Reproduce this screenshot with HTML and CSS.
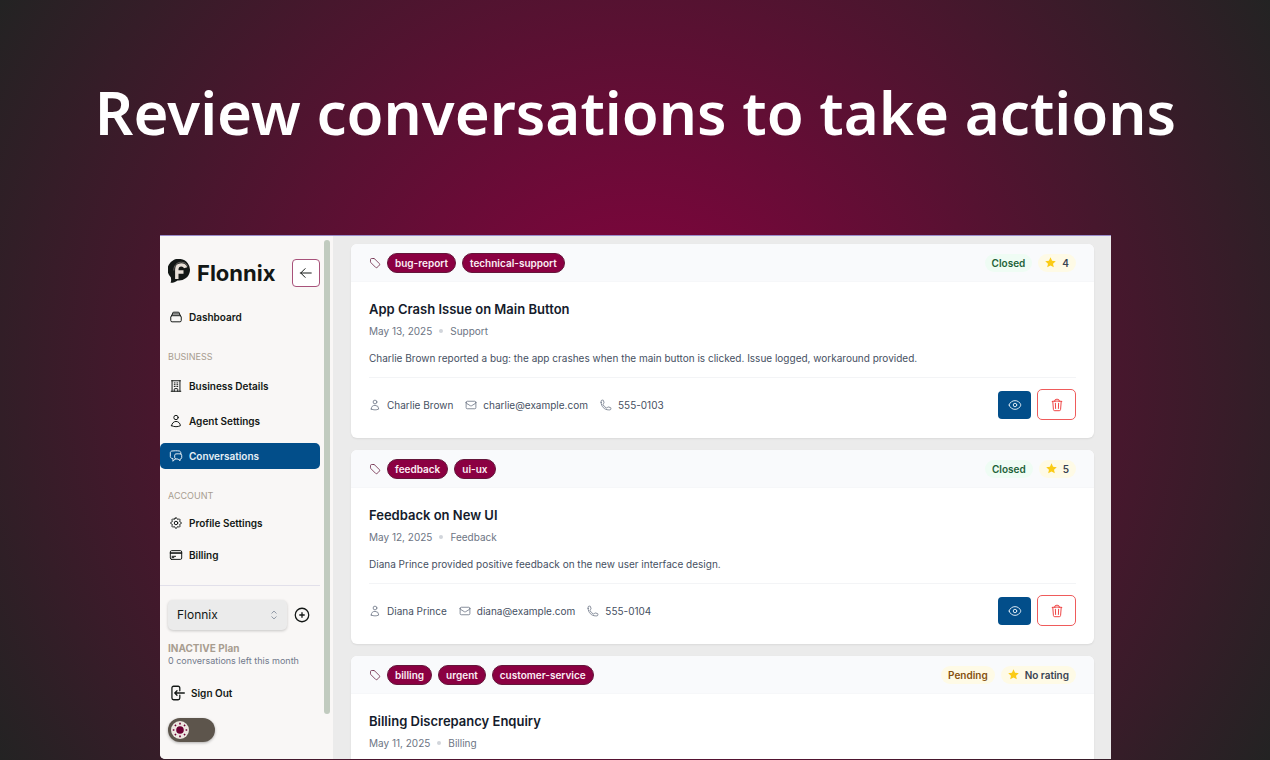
FILE: index.html
```html
<!DOCTYPE html>
<html lang="en">
<head>
    <meta charset="UTF-8">
    <meta name="viewport" content="width=device-width, initial-scale=1.0">
    <title>Flonnix - Conversations</title>
    <link rel="stylesheet" href="styles.css">
</head>
<body>
    <!-- Icon sprite -->
    <svg class="sprite" aria-hidden="true">
        <symbol id="i-stack" viewBox="0 0 24 24"><path d="M6 6.878V6a2.25 2.25 0 0 1 2.25-2.25h7.5A2.25 2.25 0 0 1 18 6v.878m-12 0c.235-.083.487-.128.75-.128h10.5c.263 0 .515.045.75.128m-12 0A2.25 2.25 0 0 0 4.5 9v.878m13.5-3A2.25 2.25 0 0 1 19.5 9v.878m0 0a2.246 2.246 0 0 0-.75-.128H5.25c-.263 0-.515.045-.75.128m15 0A2.25 2.25 0 0 1 21 12v6a2.25 2.25 0 0 1-2.25 2.25H5.25A2.25 2.25 0 0 1 3 18v-6c0-.98.626-1.813 1.5-2.122"/></symbol>
        <symbol id="i-building" viewBox="0 0 24 24"><path d="M3.75 21h16.5M4.5 3h15M5.25 3v18m13.5-18v18M9 6.75h1.5m-1.5 3h1.5m-1.5 3h1.5m3-6H15m-1.5 3H15m-1.5 3H15M9 21v-3.375c0-.621.504-1.125 1.125-1.125h3.75c.621 0 1.125.504 1.125 1.125V21"/></symbol>
        <symbol id="i-user" viewBox="0 0 24 24"><path d="M15.75 6a3.75 3.75 0 1 1-7.5 0 3.75 3.75 0 0 1 7.5 0ZM4.501 20.118a7.5 7.5 0 0 1 14.998 0A17.933 17.933 0 0 1 12 21.75c-2.676 0-5.216-.584-7.499-1.632Z"/></symbol>
        <symbol id="i-chat" viewBox="0 0 24 24"><path d="M20.25 8.511c.884.284 1.5 1.128 1.5 2.097v4.286c0 1.136-.847 2.1-1.98 2.193-.34.027-.68.052-1.02.072v3.091l-3-3c-1.354 0-2.694-.055-4.02-.163a2.115 2.115 0 0 1-.825-.242m9.345-8.334a2.126 2.126 0 0 0-.476-.095 48.64 48.64 0 0 0-8.048 0c-1.131.094-1.976 1.057-1.976 2.192v4.286c0 .837.46 1.58 1.155 1.951m9.345-8.334V6.637c0-1.621-1.152-3.026-2.76-3.235A48.455 48.455 0 0 0 11.25 3c-2.115 0-4.198.137-6.24.402-1.608.209-2.76 1.614-2.76 3.235v6.226c0 1.621 1.152 3.026 2.76 3.235.577.075 1.157.14 1.74.194V21l4.155-4.155"/></symbol>
        <symbol id="i-cog" viewBox="0 0 24 24"><path d="M10.343 3.94c.09-.542.56-.94 1.11-.94h1.093c.55 0 1.02.398 1.11.94l.149.894c.07.424.384.764.78.93.398.164.855.142 1.205-.108l.737-.527a1.125 1.125 0 0 1 1.45.12l.773.774c.39.389.44 1.002.12 1.45l-.527.737c-.25.35-.272.806-.107 1.204.165.397.505.71.93.78l.893.15c.543.09.94.559.94 1.109v1.094c0 .55-.397 1.02-.94 1.11l-.894.149c-.424.07-.764.383-.929.78-.165.398-.143.854.107 1.204l.527.738c.32.447.269 1.06-.12 1.45l-.774.773a1.125 1.125 0 0 1-1.449.12l-.738-.527c-.35-.25-.806-.272-1.203-.107-.398.165-.71.505-.781.929l-.149.894c-.09.542-.56.94-1.11.94h-1.094c-.55 0-1.019-.398-1.11-.94l-.148-.894c-.071-.424-.384-.764-.781-.93-.398-.164-.854-.142-1.204.108l-.738.527c-.447.32-1.06.269-1.45-.12l-.773-.774a1.125 1.125 0 0 1-.12-1.45l.527-.737c.25-.35.272-.806.108-1.204-.165-.397-.506-.71-.93-.78l-.894-.15c-.542-.09-.94-.56-.94-1.109v-1.094c0-.55.398-1.02.94-1.11l.894-.149c.424-.07.765-.383.93-.78.165-.398.143-.854-.108-1.204l-.526-.738a1.125 1.125 0 0 1 .12-1.45l.773-.773a1.125 1.125 0 0 1 1.45-.12l.737.527c.35.25.807.272 1.204.107.397-.165.71-.505.78-.929l.15-.894Z"/><circle cx="12" cy="12" r="3"/></symbol>
        <symbol id="i-card" viewBox="0 0 24 24"><path d="M2.25 8.25h19.5M2.25 9h19.5m-16.5 5.25h6m-6 2.25h3m-3.75 3h15a2.25 2.25 0 0 0 2.25-2.25V6.75A2.25 2.25 0 0 0 19.5 4.5h-15a2.25 2.25 0 0 0-2.25 2.25v10.5A2.25 2.25 0 0 0 4.5 19.5Z"/></symbol>
        <symbol id="i-signout" viewBox="0 0 24 24"><path d="M15.75 9V5.25A2.25 2.25 0 0 0 13.5 3h-6a2.25 2.25 0 0 0-2.25 2.25v13.5A2.25 2.25 0 0 0 7.5 21h6a2.25 2.25 0 0 0 2.25-2.25V15M12 9l-3 3m0 0 3 3m-3-3h12.75"/></symbol>
        <symbol id="i-back" viewBox="0 0 24 24"><path d="M10.5 19.5 3 12m0 0 7.5-7.5M3 12h18"/></symbol>
        <symbol id="i-plus" viewBox="0 0 24 24"><path d="M12 9v6m3-3H9m12 0a9 9 0 1 1-18 0 9 9 0 0 1 18 0Z"/></symbol>
        <symbol id="i-updown" viewBox="0 0 24 24"><path d="M8.25 15 12 18.75 15.75 15m-7.5-6L12 5.25 15.75 9"/></symbol>
        <symbol id="i-mail" viewBox="0 0 24 24"><path d="M21.75 6.75v10.5a2.25 2.25 0 0 1-2.25 2.25h-15a2.25 2.25 0 0 1-2.25-2.25V6.75m19.5 0A2.25 2.25 0 0 0 19.5 4.5h-15a2.25 2.25 0 0 0-2.25 2.25m19.5 0v.243a2.25 2.25 0 0 1-1.07 1.916l-7.5 4.615a2.25 2.25 0 0 1-2.36 0L3.32 8.91a2.25 2.25 0 0 1-1.07-1.916V6.75"/></symbol>
        <symbol id="i-phone" viewBox="0 0 24 24"><path d="M2.25 6.75c0 8.284 6.716 15 15 15h2.25a2.25 2.25 0 0 0 2.25-2.25v-1.372c0-.516-.351-.966-.852-1.091l-4.423-1.106c-.44-.11-.902.055-1.173.417l-.97 1.293c-.282.376-.769.542-1.21.38a12.035 12.035 0 0 1-7.143-7.143c-.162-.441.004-.928.38-1.21l1.293-.97c.363-.271.527-.734.417-1.173L6.963 3.102a1.125 1.125 0 0 0-1.091-.852H4.5A2.25 2.25 0 0 0 2.25 4.5v2.25Z"/></symbol>
        <symbol id="i-eye" viewBox="0 0 24 24"><path d="M2.036 12.322a1.012 1.012 0 0 1 0-.639C3.423 7.51 7.36 4.5 12 4.5c4.638 0 8.573 3.007 9.963 7.178.07.207.07.431 0 .639C20.577 16.49 16.64 19.5 12 19.5c-4.638 0-8.573-3.007-9.963-7.178Z"/><circle cx="12" cy="12" r="3"/></symbol>
        <symbol id="i-trash" viewBox="0 0 24 24"><path d="m14.74 9-.346 9m-4.788 0L9.26 9m9.968-3.21c.342.052.682.107 1.022.166m-1.022-.165L18.16 19.673a2.25 2.25 0 0 1-2.244 2.077H8.084a2.25 2.25 0 0 1-2.244-2.077L4.772 5.79m14.456 0a48.108 48.108 0 0 0-3.478-.397m-12 .562c.34-.059.68-.114 1.022-.165m0 0a48.11 48.11 0 0 1 3.478-.397m7.5 0v-.916c0-1.18-.91-2.164-2.09-2.201a51.964 51.964 0 0 0-3.32 0c-1.18.037-2.09 1.022-2.09 2.201v.916m7.5 0a48.667 48.667 0 0 0-7.5 0"/></symbol>
        <symbol id="i-tag" viewBox="0 0 24 24"><path d="M9.568 3H5.25A2.25 2.25 0 0 0 3 5.25v4.318c0 .597.237 1.17.659 1.591l9.581 9.581c.699.699 1.78.872 2.607.33a18.095 18.095 0 0 0 5.223-5.223c.542-.827.369-1.908-.33-2.607L11.16 3.66A2.25 2.25 0 0 0 9.568 3Z"/></symbol>
        <symbol id="i-star" viewBox="0 0 24 24"><path d="M12 .8 15.400 8.200 23.500 9.100 17.500 14.600 19.200 22.600 12 18.600 4.800 22.600 6.500 14.600 .5 9.100 8.600 8.200Z"/></symbol>
    </svg>

    <div class="page">
        <h1 class="headline">Review conversations to take actions</h1>

        <div class="app">
            <aside class="sidebar">
                <div class="sidebar-content">
                    <div class="brand">
                        <svg class="brand-mark" viewBox="0 0 24 24" aria-hidden="true">
                            <path d="M12.500 0A11 10.800 0 1 1 9.500 21.400C7.500 22.900 5 23.800 2.600 23.700C3.300 22 3.300 20.500 2.800 18.300A11 10.800 0 0 1 12.500 0Z" fill="#131715"/>
                            <path d="M8.800 20V10.500C8.800 7.300 10.600 5.900 13.300 5.900C15.600 5.900 17 6.900 17.600 8.700M9 13H15.500" fill="none" stroke="#e7dfd6" stroke-width="3.400"/>
                            <path d="M5.800 11.500C5.800 6.500 9 3.200 13.300 3.200C16.500 3.200 18.800 4.800 19.600 7.500" fill="none" stroke="#8d8882" stroke-width=".7"/>
                        </svg>
                        <span class="brand-name">Flonnix</span>
                        <button class="back-btn" aria-label="Collapse sidebar"><svg class="icon"><use href="#i-back"/></svg></button>
                    </div>

                    <nav class="nav">
                        <a class="nav-link" href="#"><svg class="icon"><use href="#i-stack"/></svg>Dashboard</a>
                        <h2 class="nav-label">BUSINESS</h2>
                        <div class="nav-group">
                            <a class="nav-link" href="#"><svg class="icon"><use href="#i-building"/></svg>Business Details</a>
                            <a class="nav-link" href="#"><svg class="icon"><use href="#i-user"/></svg>Agent Settings</a>
                            <a class="nav-link active" href="#"><svg class="icon"><use href="#i-chat"/></svg>Conversations</a>
                        </div>
                        <h2 class="nav-label">ACCOUNT</h2>
                        <div class="nav-group compact">
                            <a class="nav-link" href="#"><svg class="icon"><use href="#i-cog"/></svg>Profile Settings</a>
                            <a class="nav-link" href="#"><svg class="icon"><use href="#i-card"/></svg>Billing</a>
                        </div>
                    </nav>

                    <div class="sidebar-footer">
                        <div class="business-row">
                            <div class="select-wrap">
                                <select class="business-select" aria-label="Business">
                                    <option>Flonnix</option>
                                </select>
                                <svg class="icon select-arrow"><use href="#i-updown"/></svg>
                            </div>
                            <button class="add-btn" aria-label="Add business"><svg class="icon"><use href="#i-plus"/></svg></button>
                        </div>
                        <p class="plan">INACTIVE Plan</p>
                        <p class="quota">0 conversations left this month</p>
                        <button class="signout"><svg class="icon"><use href="#i-signout"/></svg>Sign Out</button>
                        <label class="theme-switch">
                            <input type="checkbox" aria-label="Dark mode">
                            <span class="knob">
                                <svg class="sun" viewBox="0 0 18 18"><circle cx="9" cy="9" r="3"/><path d="M9 1.800v1.600M9 14.600v1.600M1.800 9h1.600M14.600 9h1.600M3.900 3.900l1.100 1.100M13 13l1.100 1.100M3.900 14.100l1.100-1.100M13 5l1.100-1.100"/></svg>
                            </span>
                        </label>
                    </div>
                </div>
                <div class="scroll-thumb"></div>
            </aside>

            <main class="conversations">
                <article class="card">
                    <header class="card-header">
                        <svg class="icon tag-icon"><use href="#i-tag"/></svg>
                        <span class="tag">bug-report</span>
                        <span class="tag">technical-support</span>
                        <span class="status closed">Closed</span>
                        <span class="rating"><svg class="star"><use href="#i-star"/></svg>4</span>
                    </header>
                    <div class="card-body">
                        <h3 class="card-title">App Crash Issue on Main Button</h3>
                        <p class="meta">May 13, 2025 <span class="dot"></span> Support</p>
                        <p class="summary">Charlie Brown reported a bug: the app crashes when the main button is clicked. Issue logged, workaround provided.</p>
                        <footer class="card-footer">
                            <span class="contact"><svg class="icon"><use href="#i-user"/></svg>Charlie Brown</span>
                            <span class="contact"><svg class="icon"><use href="#i-mail"/></svg>charlie@example.com</span>
                            <span class="contact"><svg class="icon"><use href="#i-phone"/></svg>555-0103</span>
                            <div class="actions">
                                <button class="view-btn" aria-label="View"><svg class="icon"><use href="#i-eye"/></svg></button>
                                <button class="delete-btn" aria-label="Delete"><svg class="icon"><use href="#i-trash"/></svg></button>
                            </div>
                        </footer>
                    </div>
                </article>

                <article class="card">
                    <header class="card-header">
                        <svg class="icon tag-icon"><use href="#i-tag"/></svg>
                        <span class="tag">feedback</span>
                        <span class="tag">ui-ux</span>
                        <span class="status closed">Closed</span>
                        <span class="rating"><svg class="star"><use href="#i-star"/></svg>5</span>
                    </header>
                    <div class="card-body">
                        <h3 class="card-title">Feedback on New UI</h3>
                        <p class="meta">May 12, 2025 <span class="dot"></span> Feedback</p>
                        <p class="summary">Diana Prince provided positive feedback on the new user interface design.</p>
                        <footer class="card-footer">
                            <span class="contact"><svg class="icon"><use href="#i-user"/></svg>Diana Prince</span>
                            <span class="contact"><svg class="icon"><use href="#i-mail"/></svg>diana@example.com</span>
                            <span class="contact"><svg class="icon"><use href="#i-phone"/></svg>555-0104</span>
                            <div class="actions">
                                <button class="view-btn" aria-label="View"><svg class="icon"><use href="#i-eye"/></svg></button>
                                <button class="delete-btn" aria-label="Delete"><svg class="icon"><use href="#i-trash"/></svg></button>
                            </div>
                        </footer>
                    </div>
                </article>

                <article class="card">
                    <header class="card-header">
                        <svg class="icon tag-icon"><use href="#i-tag"/></svg>
                        <span class="tag">billing</span>
                        <span class="tag">urgent</span>
                        <span class="tag">customer-service</span>
                        <span class="status pending">Pending</span>
                        <span class="rating"><svg class="star"><use href="#i-star"/></svg>No rating</span>
                    </header>
                    <div class="card-body">
                        <h3 class="card-title">Billing Discrepancy Enquiry</h3>
                        <p class="meta">May 11, 2025 <span class="dot"></span> Billing</p>
                    </div>
                </article>
            </main>
        </div>
    </div>
</body>
</html>
```

FILE: styles.css
```css
:root {
    --maroon: #8b0042;
    --blue: #024e8a;
    --ink: #131715;
    --taupe: #a89d90;
    --slate: #465062;
}

* {
    box-sizing: border-box;
}

body {
    margin: 0;
    font-family: Inter, "Liberation Sans", sans-serif;
    font-size: 10px;
    line-height: 16px;
    color: var(--ink);
}

h1, h2, h3, p {
    margin: 0;
}

button {
    font: inherit;
    color: inherit;
    cursor: pointer;
    padding: 0;
    border: none;
    background: none;
}

.sprite {
    position: absolute;
    width: 0;
    height: 0;
}

.icon {
    width: 14px;
    height: 14px;
    flex: none;
    fill: none;
    stroke: currentColor;
    stroke-width: 1.7;
    stroke-linecap: round;
    stroke-linejoin: round;
}

.page {
    height: 100vh;
    overflow: hidden;
    display: flex;
    flex-direction: column;
    padding: 0 159px 1px 160px;
    background: radial-gradient(circle farthest-corner at center, #8b0040, #232323);
}

.headline {
    margin: 0 -160px;
    padding: 72px 0 83px;
    font-family: "Noto Sans", sans-serif;
    font-size: 60px;
    line-height: 80px;
    font-weight: 600;
    text-align: center;
    white-space: nowrap;
    color: white;
}

.app {
    flex: 1;
    min-height: 0;
    display: flex;
    overflow: hidden;
    border-top: 1px solid #9a8ccb;
    border-bottom-left-radius: 5px;
    background: #ebebeb;
}

/* Sidebar */
.sidebar {
    display: flex;
    width: 173px;
    flex: none;
    background: #f9f7f6;
}

.sidebar-content {
    width: 160px;
}

.scroll-thumb {
    width: 6px;
    height: 474px;
    margin: 4px 0 0 4px;
    border-radius: 3px;
    background: #c1cbbf;
}

.brand {
    display: flex;
    align-items: flex-start;
    padding: 23px 0 0 8px;
}

.brand-mark {
    width: 24px;
    height: 24px;
    margin-right: 5px;
}

.brand-name {
    font-size: 22px;
    line-height: 28px;
    font-weight: 700;
}

.back-btn {
    display: flex;
    align-items: center;
    justify-content: center;
    width: 28px;
    height: 28px;
    margin-left: auto;
    border: 1px solid #a8527a;
    border-radius: 4px;
    background: white;
}

.nav {
    padding: 17px 0 19px;
    border-bottom: 1px solid #e2e0ea;
}

.nav-link {
    display: flex;
    align-items: center;
    gap: 6px;
    height: 26px;
    padding-left: 9px;
    border-radius: 5px;
    font-weight: 600;
    color: var(--ink);
    text-decoration: none;
}

.nav-link.active {
    background: var(--blue);
    color: #e6eef5;
}

.nav-label {
    padding: 19px 0 8px 8px;
    font-size: 9px;
    line-height: 16px;
    font-weight: 400;
    color: var(--taupe);
}

.nav-group {
    display: grid;
    gap: 9px;
}

.nav-group.compact {
    gap: 10px;
}

.compact .nav-link {
    height: 22px;
}

.sidebar-footer {
    padding: 14px 9px 0 8px;
}

.business-row {
    display: flex;
    align-items: center;
    gap: 6px;
    margin-bottom: 11px;
}

.select-wrap {
    position: relative;
    flex: 1;
}

.business-select {
    appearance: none;
    width: 100%;
    height: 30px;
    padding: 0 9px;
    border: none;
    border-radius: 5px;
    font: inherit;
    font-size: 12px;
    color: var(--ink);
    background: #ebebeb;
    box-shadow: 0 1px 3px rgba(0,0,0,0.2);
}

.select-arrow {
    position: absolute;
    top: 8px;
    right: 6px;
    color: #8d96a3;
}

.add-btn {
    display: flex;
}

.add-btn .icon {
    width: 18px;
    height: 18px;
}

.plan {
    line-height: 14px;
    font-weight: 700;
    color: var(--taupe);
}

.quota {
    font-size: 9px;
    line-height: 12px;
    color: #727a8c;
}

.signout {
    display: flex;
    align-items: center;
    gap: 5px;
    margin: 17px 0 16px;
    font-weight: 600;
}

.signout .icon {
    width: 18px;
    height: 18px;
}

.theme-switch {
    display: flex;
    width: 47px;
    height: 24px;
    padding: 3px;
    border-radius: 12px;
    background: #5d554c;
    box-shadow: 0 1px 3px rgba(0,0,0,0.3);
    cursor: pointer;
}

.theme-switch input {
    position: absolute;
    opacity: 0;
    margin: 0;
}

.knob {
    width: 18px;
    height: 18px;
    border-radius: 50%;
    background: #ece6e0;
}

.theme-switch input:checked + .knob {
    margin-left: auto;
}

.sun {
    display: block;
    fill: #6d0034;
    stroke: #6d0034;
    stroke-width: 1.6;
}

/* Conversation cards */
.conversations {
    flex: 1;
    min-width: 0;
    padding: 8px 17px 0 18px;
}

.card {
    margin-bottom: 12px;
    border-radius: 6px;
    overflow: hidden;
    background: white;
    box-shadow: 0 1px 2px rgba(0,0,0,0.08);
}

.card-header {
    display: flex;
    align-items: center;
    gap: 6px;
    height: 38px;
    padding: 0 18px;
    border-bottom: 1px solid #f6f7f9;
    background: #f9fafc;
}

.tag-icon {
    width: 12px;
    height: 12px;
    color: #74304f;
}

.tag {
    padding: 1px 7px;
    border: 1px solid #64163a;
    border-radius: 10px;
    font-weight: 600;
    line-height: 16px;
    color: #fbeef4;
    background: var(--maroon);
}

.status,
.rating {
    padding: 1px 7px;
    border-radius: 9px;
    font-weight: 600;
}

.status {
    margin-left: auto;
}

.closed {
    color: #1d6238;
    background: #effcf4;
}

.pending {
    color: #85500f;
    background: #fefae6;
}

.rating {
    display: flex;
    align-items: center;
    gap: 6px;
    color: #394353;
    background: #fefae6;
}

.star {
    width: 11px;
    height: 11px;
    fill: #fbcb15;
}

.card-body {
    padding: 17px 18px 18px;
}

.card-title {
    font-size: 13px;
    line-height: 20px;
    font-weight: 600;
    color: #141b2b;
}

.meta {
    display: flex;
    align-items: center;
    gap: 7px;
    margin: 4px 0 11px;
    color: #6d7584;
}

.dot {
    width: 4px;
    height: 4px;
    border-radius: 50%;
    background: #d1d5db;
}

.summary {
    padding-bottom: 11px;
    border-bottom: 1px solid #f3f4f6;
    color: var(--slate);
}

.card-footer {
    display: flex;
    align-items: center;
    gap: 12px;
    padding-top: 11px;
    color: var(--slate);
}

.contact {
    display: flex;
    align-items: center;
    gap: 6px;
}

.contact .icon {
    width: 12px;
    height: 12px;
    color: #737b8a;
}

.actions {
    display: flex;
    align-items: center;
    gap: 6px;
    margin-left: auto;
}

.view-btn,
.delete-btn {
    display: flex;
    align-items: center;
    justify-content: center;
    border-radius: 4px;
}

.view-btn {
    width: 33px;
    height: 28px;
    background: var(--blue);
    color: #dbe8f2;
}

.delete-btn {
    width: 39px;
    height: 31px;
    border: 1px solid #ef5b5b;
    border-radius: 5px;
    color: #ef4444;
}
```
